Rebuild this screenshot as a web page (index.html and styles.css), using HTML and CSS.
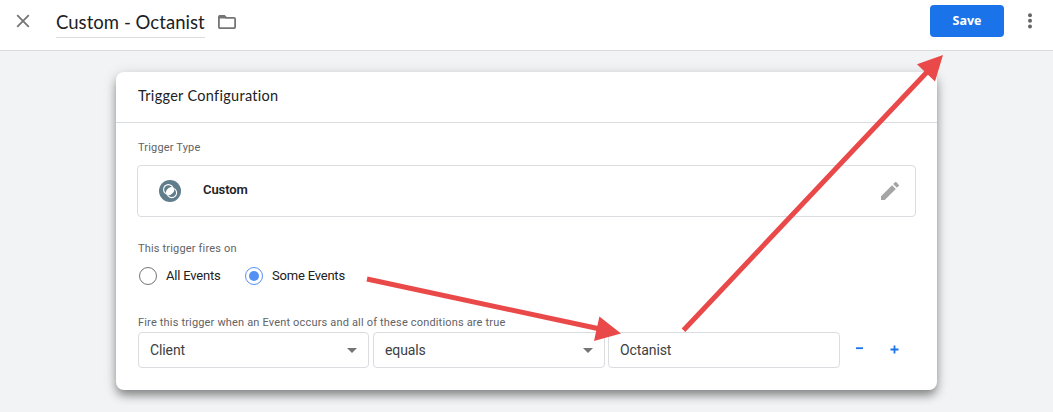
FILE: index.html
```html
<!DOCTYPE html>
<html lang="en">
<head>
<meta charset="utf-8">
<title>Trigger Configuration</title>
<link rel="stylesheet" href="styles.css">
</head>
<body>
<header class="topbar">
  <svg class="close" width="14" height="14" viewBox="0 0 14 14"><path d="M1.2 1.2 12.8 12.8M12.8 1.2 1.2 12.8"/></svg>
  <h1 class="name"><span>Custom - Octanist</span></h1>
  <svg class="folder" width="20" height="16" viewBox="0 0 20 16"><path class="folder-line" d="M3 1.9H7.2L9.2 3.9H17A1.1 1.1 0 0 1 18.1 5V13A1.1 1.1 0 0 1 17 14.1H3A1.1 1.1 0 0 1 1.9 13V3A1.1 1.1 0 0 1 3 1.9Z"/><path class="folder-tab" d="M2 1H7.5L9.5 3V4.4H2Z"/></svg>
  <button class="save">Save</button>
  <svg class="more" width="6" height="16" viewBox="0 0 6 16"><circle cx="3" cy="2.2" r="2"/><circle cx="3" cy="7.8" r="2"/><circle cx="3" cy="13.4" r="2"/></svg>
</header>
<main class="card">
  <h2 class="card-title"><span>Trigger Configuration</span></h2>
  <section class="content">
    <div class="label type-label"><span>Trigger Type</span></div>
    <div class="type-box">
      <svg class="type-icon" width="22" height="22" viewBox="0 0 22 22"><circle cx="11" cy="11" r="11" fill="#607d8b"/><g fill="none" stroke="#fff" stroke-width="1.1"><circle cx="9.4" cy="9.4" r="4.8"/><circle cx="12.8" cy="12.8" r="4.8"/></g><ellipse cx="11.1" cy="11.1" rx="4.5" ry="3.2" transform="rotate(-45 11.1 11.1)" fill="#fff"/></svg>
      <strong class="type-name">Custom</strong>
      <svg class="pencil" width="18" height="18" viewBox="3 3 18 18"><path d="M3 17.25V21h3.75L17.81 9.94l-3.75-3.75zM20.71 7.04a1 1 0 0 0 0-1.41l-2.34-2.34a1 1 0 0 0-1.41 0l-1.83 1.83 3.75 3.75z"/></svg>
    </div>
    <div class="label fires-label"><span>This trigger fires on</span></div>
    <div class="radios">
      <span class="radio"></span><span class="radio-text all">All Events</span>
      <span class="radio on"></span><span class="radio-text some">Some Events</span>
    </div>
    <div class="label cond-label"><span>Fire this trigger when an Event occurs and all of these conditions are true</span></div>
    <div class="conditions">
      <div class="field"><span>Client</span><i class="caret"></i></div>
      <div class="field second"><span>equals</span><i class="caret"></i></div>
      <div class="field third"><span>Octanist</span></div>
      <svg class="minus" width="7" height="9" viewBox="0 0 7 9"><path d="M0 3.2H7"/></svg>
      <svg class="plus" width="9" height="9" viewBox="0 0 9 9"><path d="M0.5 4.5H8.5M4.5 0.5V8.5"/></svg>
    </div>
  </section>
</main>
<svg class="arrows" width="1053" height="412" viewBox="0 0 1053 412">
  <path d="M367 279 599 328.8M683.5 330.2 928 71"/>
  <path class="head" d="M621 333.6 599.4 316.5 594 341ZM943 55 917 64.3 935 81.5Z"/>
</svg>
</body>
</html>
```
FILE: styles.css
```css
* { box-sizing: border-box; }
body { margin: 0; width: 1053px; height: 412px; overflow: hidden; background: #f1f3f4; font-family: Roboto, "Liberation Sans", sans-serif; color: #202124; }
svg { display: block; flex: none; }
.topbar { display: flex; height: 51px; padding-left: 16px; background: #fff; border-bottom: 1px solid #dadce0; }
.close { margin-top: 14px; fill: none; stroke: #757575; stroke-width: 1.8; }
.name { width: 149px; height: 38px; margin: 0 0 0 26px; border-bottom: 1px solid #dadce0; font: 400 18.5px/44px Lato, sans-serif; letter-spacing: .05px; white-space: nowrap; }
.folder { margin: 14px 0 0 12px; }
.folder-line { fill: none; stroke: #757575; stroke-width: 1.8; }
.folder-tab { fill: #757575; }
.save { width: 74px; height: 32px; margin: 5px 0 0 auto; padding: 0; border: 0; border-radius: 4px; background: #1a73e8; color: #fff; font: 700 12.5px/32px "Open Sans", sans-serif; }
.more { margin: 13px 20px 0 23px; fill: #666; }
.card { width: 821px; height: 318px; margin: 21px 0 0 116px; border-radius: 8px; background: #fff; box-shadow: 0 6px 10px -1px rgba(0,0,0,.38), 0 3px 14px rgba(0,0,0,.17); }
.card-title { height: 51px; margin: 0; padding-left: 22px; border-bottom: 1px solid #dadce0; font: 400 14.5px/48px Lato, sans-serif; letter-spacing: .3px; }
.content { padding: 0 21px; }
.label { height: 16px; padding-left: 1px; color: #5f6368; font-size: 11px; line-height: 16px; letter-spacing: .17px; white-space: nowrap; }
.type-label { margin-top: 17px; }
.type-box { display: flex; height: 52px; margin-top: 9px; padding: 0 16px 0 21px; border: 1px solid #dadce0; border-radius: 4px; }
.type-icon { margin-top: 14px; }
.type-name { margin: 14px auto 0 22px; font-size: 13px; line-height: 20px; font-weight: 600; letter-spacing: -.1px; }
.pencil { margin-top: 16px; fill: #a5a5a5; }
.fires-label { margin-top: 24px; }
.radios { display: flex; margin-top: 10px; height: 18px; padding-left: 2px; }
.radio { width: 18px; height: 18px; border: 1px solid #757575; border-radius: 50%; }
.radio.on { margin-left: 23px; padding: 3px; border-color: #5491f5; }
.radio.on::before { content: ""; display: block; width: 10px; height: 10px; border-radius: 50%; background: #5491f5; }
.radio-text { margin-left: 9px; font-size: 13px; line-height: 17px; letter-spacing: -.2px; white-space: nowrap; }
.all { width: 56px; }
.cond-label { margin-top: 30px; }
.conditions { display: flex; margin-top: 1px; padding-left: 1px; }
.field { display: flex; width: 231px; height: 36px; padding: 0 11px; border: 1px solid #dadce0; border-radius: 4px; color: #3c4043; font-size: 14px; line-height: 34px; letter-spacing: -.1px; }
.second { width: 232px; margin-left: 4px; }
.third { width: 232px; margin-left: 3px; }
.caret { width: 0; height: 0; margin: 15px 0 0 auto; border: 5px solid transparent; border-top-color: #757575; border-bottom: 0; }
.minus { margin: 13px 0 0 16px; }
.plus { margin: 13px 0 0 27px; }
.minus, .plus { fill: none; stroke: #1a73e8; stroke-width: 1.8; }
.arrows { position: absolute; top: 0; left: 0; fill: none; stroke: #ea4949; stroke-width: 5; pointer-events: none; }
.head { fill: #ea4949; stroke: none; }
```
